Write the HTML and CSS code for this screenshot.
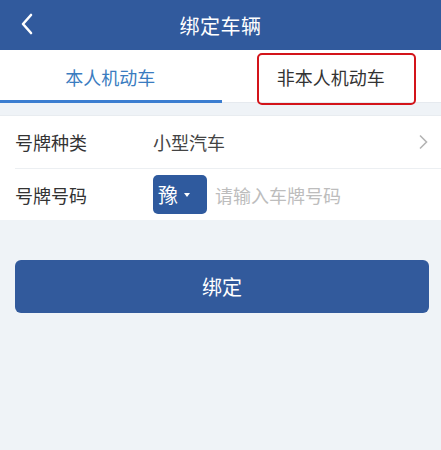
FILE: index.html
```html
<!DOCTYPE html>
<html lang="zh">
<head>
<meta charset="utf-8">
<link rel="stylesheet" href="styles.css">
</head>
<body>
<div class="page">
  <header class="topbar">
    <svg class="back" width="14" height="22" viewBox="0 0 14 22"><path d="M11 2 L3 11 L11 20" fill="none" stroke="#fff" stroke-width="2.6" stroke-linecap="round" stroke-linejoin="round"/></svg>
    <h1 class="title">绑定车辆</h1>
  </header>
  <nav class="tabs">
    <div class="tab active">本人机动车</div>
    <div class="tab">非本人机动车</div>
    <div class="mark"></div>
  </nav>
  <div class="gap"></div>
  <section class="form">
    <div class="row">
      <span class="label">号牌种类</span>
      <span class="value">小型汽车</span>
      <svg class="chev" width="10" height="16" viewBox="0 0 10 16"><path d="M2 1.5 L8.5 8 L2 14.5" fill="none" stroke="#b4b4b4" stroke-width="1.6"/></svg>
    </div>
    <div class="row">
      <span class="label">号牌号码</span>
      <span class="prov">豫<i class="caret"></i></span>
      <span class="placeholder">请输入车牌号码</span>
    </div>
  </section>
  <div class="actions">
    <button class="btn">绑定</button>
  </div>
</div>
</body>
</html>
```
FILE: styles.css
```css
* { box-sizing: border-box; margin: 0; padding: 0; }
html, body { width: 441px; height: 450px; background: #eff3f7; overflow: hidden; }
body { font-family: "Noto Sans CJK SC", "Noto Sans", sans-serif; }
.page { position: relative; }
.topbar {
  height: 50px; background: #315a9d; display: flex; align-items: center; justify-content: center; position: relative;
}
.back { position: absolute; left: 20px; top: 13px; }
.title { font-size: 20px; font-weight: 400; color: #fff; letter-spacing: 0.5px; padding-top: 1px; }
.tabs { height: 53px; background: #fff; display: flex; position: relative; border-bottom: 1px solid #e6eaef; }
.tab { flex: 1; display: flex; align-items: center; justify-content: center; font-size: 18px; color: #333; padding-top: 2px; }
.tab.active { color: #3a7cc0; }
.mark { position: absolute; left: 257px; top: 3px; width: 159px; height: 52px; border: 2px solid #d3141a; border-radius: 5px; }
.tabs::after { content: ""; position: absolute; left: 0; bottom: -1px; width: 222px; height: 3px; background: #3b7dd0; }
.gap { height: 12px; }
.form { background: #fff; border-top: 1px solid #e8ecf0; }
.row { height: 52px; display: flex; align-items: center; padding-left: 15px; position: relative; }
.row + .row { border-top: 1px solid #eceff2; margin-left: 15px; padding-left: 0; }
.label { width: 138px; font-size: 18px; color: #333; }
.value { font-size: 18px; color: #444; flex: 1; }
.chev { margin-right: 13px; }
.prov {
  width: 54px; height: 39px; background: #2f5a9e; border-radius: 5px; color: #fff; font-size: 20px;
  display: flex; align-items: center; padding-left: 5px; gap: 6px;
}
.caret { width: 0; height: 0; border-left: 3px solid transparent; border-right: 3px solid transparent; border-top: 4px solid #fff; }
.placeholder { margin-left: 8px; font-size: 18px; color: #bdbdbd; }
.actions { padding: 40px 12px 0 15px; }
.btn {
  width: 414px; height: 53px; background: #325a9c; border: none; border-radius: 6px; color: #fff; font-size: 20px;
  font-family: "Noto Sans CJK SC", sans-serif;
}
```
